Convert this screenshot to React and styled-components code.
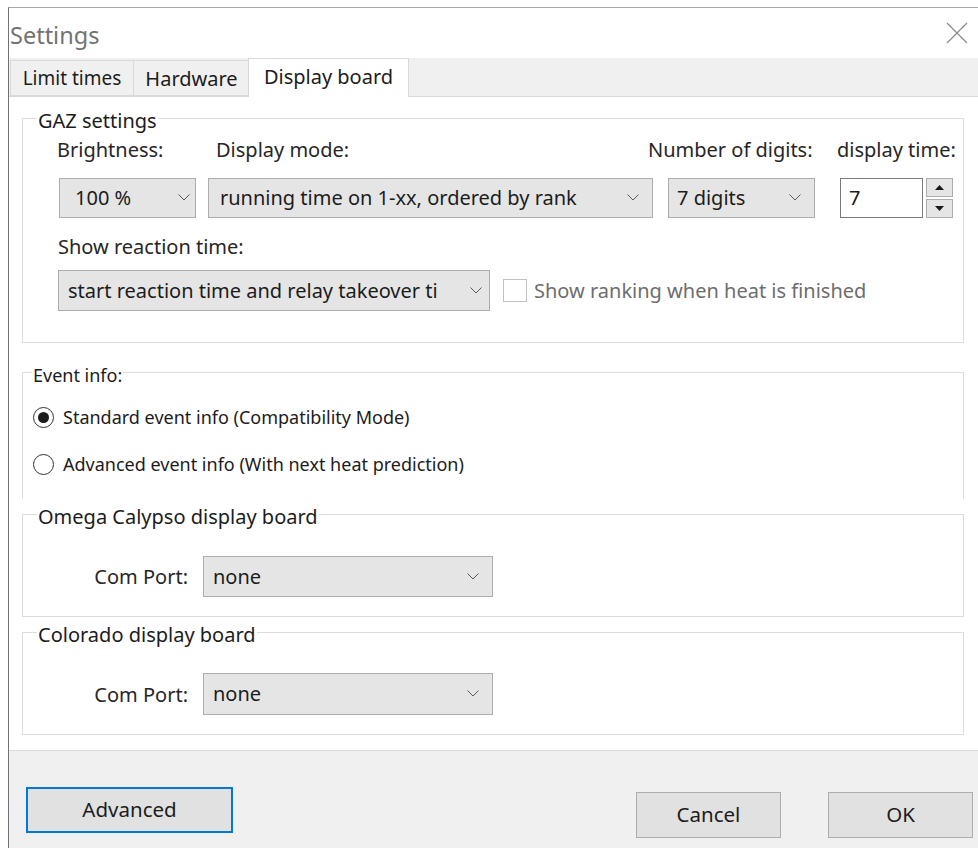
import React from "react";
import styled, { createGlobalStyle } from "styled-components";

const Global = createGlobalStyle`
  html, body { margin: 0; padding: 0; background: #ffffff; }
  body {
    font-family: "Noto Sans", "Open Sans", sans-serif;
    font-size: 20px;
    color: #1c1c1c;
  }
  * { box-sizing: border-box; }
`;

const Screen = styled.div`
  height: 848px;
  padding: 7px 0 0 8px;
  background: #ffffff;
  overflow: hidden;
`;

const Window = styled.div`
  height: 100%;
  display: flex;
  flex-direction: column;
  border-left: 1px solid #6e7178;
  border-top: 1px solid #a8a8a8;
  background: #f0f0f0;
`;

const TitleBar = styled.div`
  height: 50px;
  flex: none;
  display: flex;
  align-items: center;
  justify-content: space-between;
  padding: 3px 10px 0 1px;
  background: #ffffff;
`;

const Title = styled.div`
  font-size: 23.5px;
  color: #737373;
  line-height: 28px;
`;

const CloseButton = styled.div`
  width: 22px;
  height: 22px;
  margin-top: -4px;
  display: flex;
`;

const TabStrip = styled.div`
  height: 38px;
  flex: none;
  display: flex;
  align-items: flex-end;
  padding-left: 1px;
`;

const Tab = styled.div`
  position: relative;
  width: ${(p) => p.$w}px;
  height: ${(p) => (p.$active ? 39 : 36)}px;
  margin-left: ${(p) => p.$shift || 0}px;
  margin-bottom: ${(p) => (p.$active ? -1 : 0)}px;
  z-index: ${(p) => (p.$active ? 1 : 0)};
  display: flex;
  justify-content: center;
  align-items: center;
  padding-bottom: ${(p) => (p.$active ? 4 : 0)}px;
  border: 1px solid #d9d9d9;
  border-bottom: ${(p) => (p.$active ? "none" : "1px solid #d9d9d9")};
  background: ${(p) => (p.$active ? "#ffffff" : "#f0f0f0")};
  color: #1c1c1c;
  font-size: ${(p) => p.$fs || 20}px;
  white-space: nowrap;
`;

const TabPage = styled.div`
  height: 655px;
  flex: none;
  display: flex;
  flex-direction: column;
  padding: 21px 0 0 13px;
  background: #ffffff;
  border-top: 1px solid #d9d9d9;
  border-bottom: 1px solid #dadada;
`;

const Group = styled.section`
  flex: none;
  width: 942px;
  margin-top: ${(p) => p.$gap || 0}px;
  height: ${(p) => (p.$h ? `${p.$h}px` : "auto")};
  border: 1px solid #dcdcdc;
  border-bottom: ${(p) => (p.$open ? "none" : "1px solid #dcdcdc")};
  padding: 0 0 ${(p) => p.$pb || 0}px 0;
  display: flex;
  flex-direction: column;
  font-size: ${(p) => p.$fs || 20}px;
`;

const Caption = styled.div`
  width: max-content;
  margin: -10px 0 0 ${(p) => p.$x}px;
  padding: 0 1px;
  line-height: 24px;
  background: #ffffff;
  color: #1c1c1c;
`;

/* columns start at 59, 208, 668 and 840 px */
const FieldGrid = styled.div`
  display: grid;
  grid-template-columns: 149px 460px 172px 113px;
  margin: 5px 0 0 36px;
  row-gap: 16px;
  align-items: center;
`;

const FieldLabel = styled.div`
  line-height: 24px;
  white-space: nowrap;
  color: #262626;
  margin-left: ${(p) => p.$dx || 0}px;
`;

const Combo = styled.div`
  width: ${(p) => (p.$w ? `${p.$w}px` : "100%")};
  height: ${(p) => p.$h || 40}px;
  display: flex;
  align-items: center;
  padding: 0 ${(p) => p.$pr || 13}px 1px ${(p) => p.$pl || 9}px;
  background: #e5e5e5;
  border: 1px solid #adadad;
  color: #1c1c1c;
  white-space: nowrap;
`;

const ComboText = styled.span`
  flex: 1;
  min-width: 0;
  overflow: hidden;
  margin-right: ${(p) => p.$gap || 8}px;
`;

const SpinWrap = styled.div`
  display: flex;
  gap: 3px;
  height: 40px;
`;

const SpinInput = styled.div`
  width: 83px;
  height: 40px;
  border: 1px solid #7a7a7a;
  background: #ffffff;
  padding: 0 0 1px 8px;
  display: flex;
  align-items: center;
`;

const SpinButtons = styled.div`
  width: 27px;
  display: flex;
  flex-direction: column;
  justify-content: space-between;
`;

const SpinButton = styled.div`
  height: 19px;
  background: #e5e5e5;
  border: 1px solid #adadad;
  display: flex;
  align-items: center;
  justify-content: center;
`;

const ReactionLabel = styled(FieldLabel)`
  margin: 17px 0 0 35px;
`;

const ReactionRow = styled.div`
  display: flex;
  align-items: center;
  margin: 11px 0 0 35px;
`;

const CheckOption = styled.div`
  display: flex;
  align-items: center;
  margin-left: 13px;
  color: #6d6d6d;
  gap: 7px;
  white-space: nowrap;
`;

const CheckBox = styled.div`
  width: 24px;
  height: 23px;
  border: 1px solid #c2c2c2;
  background: #ffffff;
`;

const RadioOption = styled.div`
  display: flex;
  align-items: center;
  gap: 9px;
  margin: ${(p) => p.$mt}px 0 0 10px;
  line-height: 24px;
  color: #1c1c1c;
`;

const RadioDot = styled.div`
  width: 21px;
  height: 21px;
  border-radius: 50%;
  border: 1px solid #333333;
  background: #ffffff;
  display: flex;
  align-items: center;
  justify-content: center;
  &::after {
    content: "";
    width: 11px;
    height: 11px;
    border-radius: 50%;
    background: ${(p) => (p.$on ? "#1c1c1c" : "transparent")};
  }
`;

const PortRow = styled.div`
  display: flex;
  align-items: center;
  margin: ${(p) => p.$mt}px 0 0 0;
`;

const PortLabel = styled.div`
  width: 180px;
  padding-right: 15px;
  text-align: right;
  color: #262626;
  white-space: nowrap;
`;

const Footer = styled.div`
  flex: 1;
  display: flex;
  align-items: flex-start;
  padding: 36px 0 0 17px;
  font-size: 20.5px;
`;

const Button = styled.div`
  width: ${(p) => p.$w}px;
  height: 46px;
  margin-top: ${(p) => p.$mt || 0}px;
  margin-left: ${(p) => p.$ml || 0}px;
  display: flex;
  align-items: center;
  justify-content: center;
  padding-bottom: 2px;
  background: #e1e1e1;
  border: ${(p) => (p.$focus ? "2px solid #0078d7" : "1px solid #adadad")};
  color: #1c1c1c;
`;

const Chevron = () => (
  <svg width="12" height="7" viewBox="0 0 12 7" style={{ flex: "none" }}>
    <polyline points="0.5,0.5 6,6 11.5,0.5" fill="none" stroke="#5a5a5a" strokeWidth="1" />
  </svg>
);

const Triangle = ({ up }) => (
  <svg width="9" height="5" viewBox="0 0 9 5">
    <polygon points={up ? "0,5 4.5,0 9,5" : "0,0 4.5,5 9,0"} fill="#1a1a1a" />
  </svg>
);

const Select = ({ value, textGap, ...rest }) => (
  <Combo {...rest}>
    <ComboText $gap={textGap}>{value}</ComboText>
    <Chevron />
  </Combo>
);

export default function App() {
  return (
    <>
      <Global />
      <Screen>
        <Window>
          <TitleBar>
            <Title>Settings</Title>
            <CloseButton>
              <svg width="22" height="22" viewBox="0 0 22 22">
                <path d="M1 1 L21 21 M21 1 L1 21" stroke="#8a8a8a" strokeWidth="1.2" />
              </svg>
            </CloseButton>
          </TitleBar>

          <TabStrip>
            <Tab $w={124} $fs={19}>Limit times</Tab>
            <Tab $w={117} $shift={-1}>Hardware</Tab>
            <Tab $w={161} $shift={-2} $active>Display board</Tab>
          </TabStrip>

          <TabPage>
            <Group $pb={31}>
              <Caption $x={14}>GAZ settings</Caption>
              <FieldGrid>
                <FieldLabel $dx={-2}>Brightness:</FieldLabel>
                <FieldLabel $dx={8}>Display mode:</FieldLabel>
                <FieldLabel $dx={-20}>Number of digits:</FieldLabel>
                <FieldLabel $dx={-3}>display time:</FieldLabel>

                <Select value="100 %" $w={137} $pl={15} $pr={5} />
                <Select value="running time on 1-xx, ordered by rank" $w={445} $pl={11} />
                <Select value="7 digits" $w={147} $pl={8} />
                <SpinWrap>
                  <SpinInput>7</SpinInput>
                  <SpinButtons>
                    <SpinButton><Triangle up /></SpinButton>
                    <SpinButton><Triangle /></SpinButton>
                  </SpinButtons>
                </SpinWrap>
              </FieldGrid>

              <ReactionLabel>Show reaction time:</ReactionLabel>
              <ReactionRow>
                <Select
                  value="start reaction time and relay takeover ti"
                  $w={432}
                  $h={41}
                  $pr={7}
                  textGap={10}
                />
                <CheckOption>
                  <CheckBox />
                  <span>Show ranking when heat is finished</span>
                </CheckOption>
              </ReactionRow>
            </Group>

            <Group $gap={29} $h={127} $open $fs={18}>
              <Caption $x={9}>Event info:</Caption>
              <RadioOption $mt={18}>
                <RadioDot $on />
                <span>Standard event info (Compatibility Mode)</span>
              </RadioOption>
              <RadioOption $mt={23}>
                <RadioDot />
                <span>Advanced event info (With next heat prediction)</span>
              </RadioOption>
            </Group>

            <Group $gap={15} $pb={19}>
              <Caption $x={14}>Omega Calypso display board</Caption>
              <PortRow $mt={27}>
                <PortLabel>Com Port:</PortLabel>
                <Select value="none" $w={290} $h={41} />
              </PortRow>
            </Group>

            <Group $gap={15} $pb={19}>
              <Caption $x={14}>Colorado display board</Caption>
              <PortRow $mt={26}>
                <PortLabel>Com Port:</PortLabel>
                <Select value="none" $w={290} $h={42} />
              </PortRow>
            </Group>
          </TabPage>

          <Footer>
            <Button $w={207} $focus>Advanced</Button>
            <Button $w={145} $mt={5} $ml={403}>Cancel</Button>
            <Button $w={145} $mt={5} $ml={47}>OK</Button>
          </Footer>
        </Window>
      </Screen>
    </>
  );
}
